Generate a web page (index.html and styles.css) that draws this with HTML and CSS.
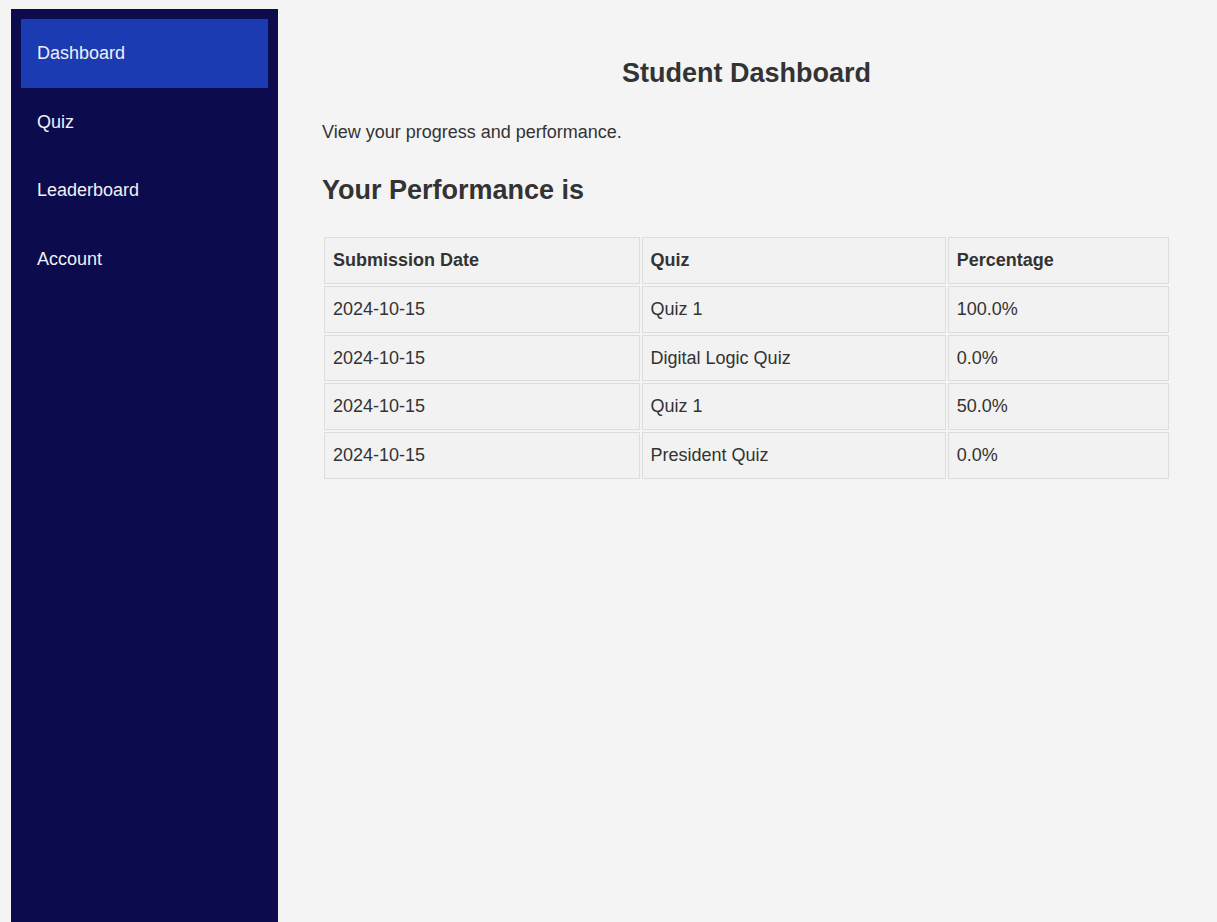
FILE: index.html
```html
<!DOCTYPE html>
<html lang="en">
<head>
<meta charset="utf-8">
<title>Student Dashboard</title>
<link rel="stylesheet" href="styles.css">
</head>
<body>
<div class="layout">
  <nav class="sidebar">
    <a class="nav-item active" href="#">Dashboard</a>
    <a class="nav-item" href="#">Quiz</a>
    <a class="nav-item" href="#">Leaderboard</a>
    <a class="nav-item" href="#">Account</a>
  </nav>
  <main class="main">
    <h2 class="title">Student Dashboard</h2>
    <p class="intro">View your progress and performance.</p>
    <h2 class="section-title">Your Performance is</h2>
    <table class="results">
      <thead>
        <tr><th>Submission Date</th><th>Quiz</th><th>Percentage</th></tr>
      </thead>
      <tbody>
        <tr><td>2024-10-15</td><td>Quiz 1</td><td>100.0%</td></tr>
        <tr><td>2024-10-15</td><td>Digital Logic Quiz</td><td>0.0%</td></tr>
        <tr><td>2024-10-15</td><td>Quiz 1</td><td>50.0%</td></tr>
        <tr><td>2024-10-15</td><td>President Quiz</td><td>0.0%</td></tr>
      </tbody>
    </table>
  </main>
</div>
</body>
</html>
```
FILE: styles.css
```css
html, body {
  margin: 0;
  padding: 0;
  height: 100%;
  overflow: hidden;
}
body {
  background: #f4f4f4;
  font-family: "Liberation Sans", Arial, sans-serif;
  font-size: 18px;
  color: #333333;
}
.layout {
  display: flex;
  padding: 9px 0 0 11px;
  min-height: 100vh;
  box-sizing: border-box;
}
.sidebar {
  width: 267px;
  flex: none;
  background: #0b0b4d;
  padding: 10px;
  box-sizing: border-box;
  display: flex;
  flex-direction: column;
  min-height: calc(100vh - 9px);
}
.nav-item {
  display: block;
  padding: 24px 16px;
  line-height: 20.67px;
  color: #f0f0f5;
  text-decoration: none;
  font-size: 18px;
}
.nav-item.active {
  background: #1a3bb2;
}
.main {
  flex: 1;
  padding: 49px 46px 0 44px;
  min-width: 0;
}
.title {
  margin: 0 0 33px;
  text-align: center;
  font-size: 27px;
  font-weight: bold;
}
.intro {
  margin: 0 0 32px;
}
.section-title {
  margin: 0 0 29px;
  font-size: 27px;
  font-weight: bold;
}
.results {
  width: 100%;
  border-spacing: 2px;
  border-collapse: separate;
}
.results th,
.results td {
  border: 1px solid #dddddd;
  background: #f2f2f2;
  padding: 12px 8px;
  line-height: 20.75px;
  text-align: left;
  font-size: 18px;
}
.results th {
  font-weight: bold;
}
```
